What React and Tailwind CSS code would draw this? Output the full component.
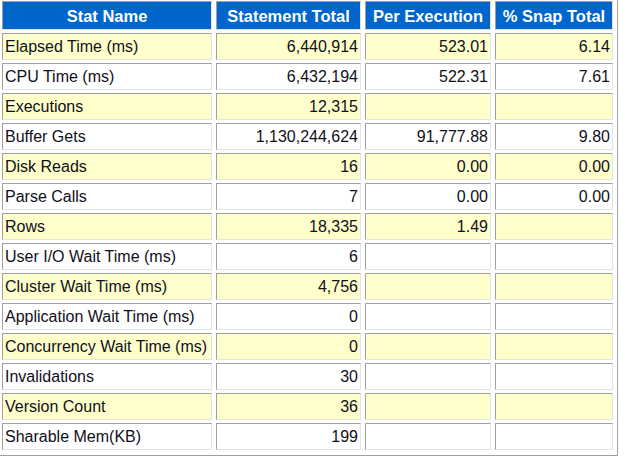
const rows = [
  ['Elapsed Time (ms)', '6,440,914', '523.01', '6.14'],
  ['CPU Time (ms)', '6,432,194', '522.31', '7.61'],
  ['Executions', '12,315', '', ''],
  ['Buffer Gets', '1,130,244,624', '91,777.88', '9.80'],
  ['Disk Reads', '16', '0.00', '0.00'],
  ['Parse Calls', '7', '0.00', '0.00'],
  ['Rows', '18,335', '1.49', ''],
  ['User I/O Wait Time (ms)', '6', '', ''],
  ['Cluster Wait Time (ms)', '4,756', '', ''],
  ['Application Wait Time (ms)', '0', '', ''],
  ['Concurrency Wait Time (ms)', '0', '', ''],
  ['Invalidations', '30', '', ''],
  ['Version Count', '36', '', ''],
  ['Sharable Mem(KB)', '199', '', ''],
]

const headers = ['Stat Name', 'Statement Total', 'Per Execution', '% Snap Total']
const widths = ['w-[210px]', 'w-[145px]', 'w-[126px]', 'w-[118px]']

const cellBorder = 'border border-t-[#a0a0a0] border-l-[#a0a0a0] border-b-[#e4e4e4] border-r-[#e4e4e4]'

export default function App() {
  return (
    <div className="h-[458px] w-[633px] overflow-hidden bg-white" style={{ fontFamily: '"Liberation Sans", Arial, sans-serif' }}>
      <table className="-ml-[3px] -mt-[3px] border-separate border-spacing-x-[4px] border-spacing-y-[3px] pb-[2px] border border-t-[#f0f0f0] border-l-[#f0f0f0] border-b-[#a0a0a0] border-r-[#a0a0a0] text-[16px] leading-none text-[#10101a]">
        <thead>
          <tr>
            {headers.map((h, i) => (
              <th key={h} className={`${widths[i]} h-[29px] ${cellBorder} bg-[#0066cc] px-[2px] pt-[1px] text-center text-[16.5px] font-bold text-white`}>
                {h}
              </th>
            ))}
          </tr>
        </thead>
        <tbody>
          {rows.map((r, idx) => {
            const bg = idx % 2 === 0 ? 'bg-[#ffffcc]' : 'bg-white'
            return (
              <tr key={r[0]}>
                {r.map((v, i) => (
                  <td
                    key={i}
                    className={`h-[27px] ${cellBorder} ${bg} px-[2px] pt-[1px] ${i === 0 ? 'text-left' : 'text-right'} whitespace-nowrap`}
                  >
                    {v}
                  </td>
                ))}
              </tr>
            )
          })}
        </tbody>
      </table>
    </div>
  )
}
